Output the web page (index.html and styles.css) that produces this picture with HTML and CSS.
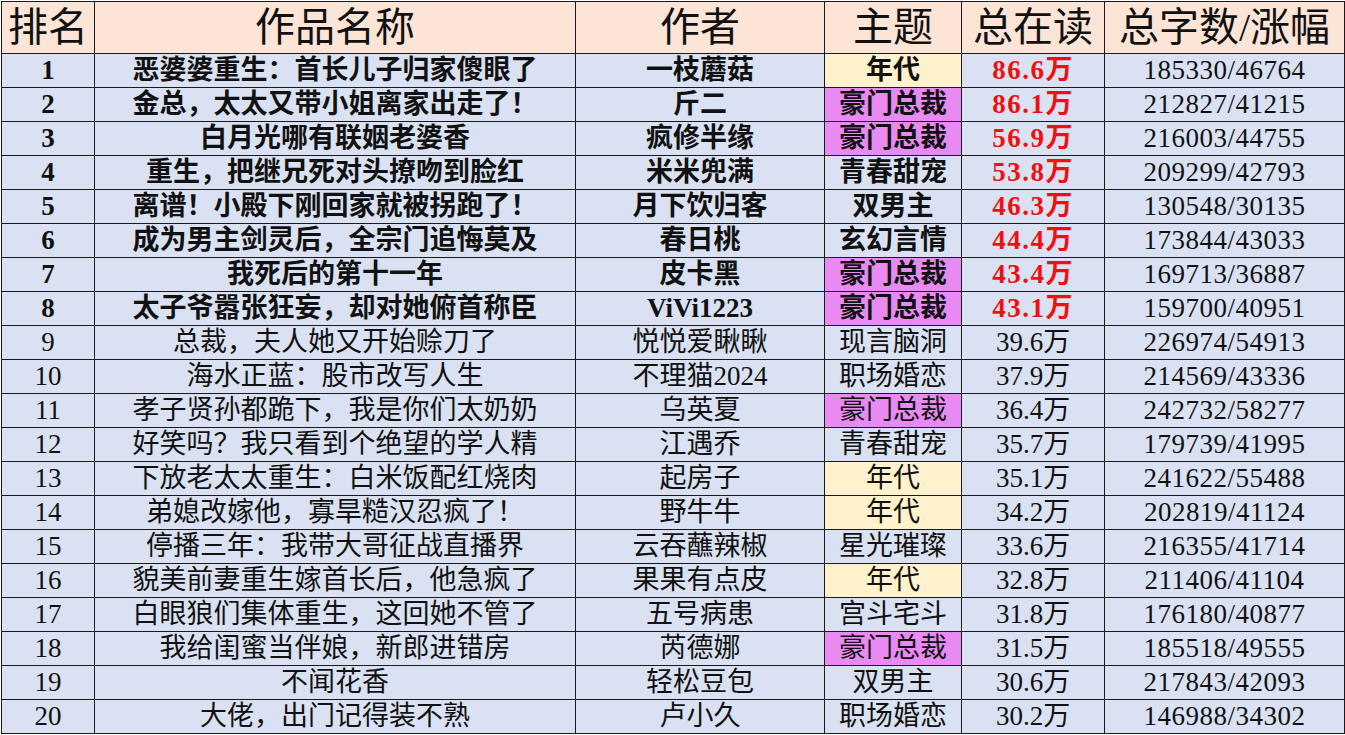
FILE: index.html
```html
<!DOCTYPE html>
<html lang="zh-CN">
<head>
<meta charset="utf-8">
<title>排名</title>
<link rel="stylesheet" href="styles.css">
</head>
<body>
<table class="rank">
  <colgroup>
    <col class="c-rank"><col class="c-title"><col class="c-author"><col class="c-theme"><col class="c-read"><col class="c-words">
  </colgroup>
  <thead>
    <tr class="head"><th>排名</th><th>作品名称</th><th>作者</th><th>主题</th><th>总在读</th><th>总字数/涨幅</th></tr>
  </thead>
  <tbody>
    <tr class="top"><td>1</td><td>恶婆婆重生：首长儿子归家傻眼了</td><td>一枝蘑菇</td><td class="t-yellow">年代</td><td class="red">86.6万</td><td class="num">185330/46764</td></tr>
    <tr class="top"><td>2</td><td>金总，太太又带小姐离家出走了！</td><td>斤二</td><td class="t-pink">豪门总裁</td><td class="red">86.1万</td><td class="num">212827/41215</td></tr>
    <tr class="top"><td>3</td><td>白月光哪有联姻老婆香</td><td>疯修半缘</td><td class="t-pink">豪门总裁</td><td class="red">56.9万</td><td class="num">216003/44755</td></tr>
    <tr class="top"><td>4</td><td>重生，把继兄死对头撩吻到脸红</td><td>米米兜满</td><td>青春甜宠</td><td class="red">53.8万</td><td class="num">209299/42793</td></tr>
    <tr class="top"><td>5</td><td>离谱！小殿下刚回家就被拐跑了！</td><td>月下饮归客</td><td>双男主</td><td class="red">46.3万</td><td class="num">130548/30135</td></tr>
    <tr class="top"><td>6</td><td>成为男主剑灵后，全宗门追悔莫及</td><td>春日桃</td><td>玄幻言情</td><td class="red">44.4万</td><td class="num">173844/43033</td></tr>
    <tr class="top"><td>7</td><td>我死后的第十一年</td><td>皮卡黑</td><td class="t-pink">豪门总裁</td><td class="red">43.4万</td><td class="num">169713/36887</td></tr>
    <tr class="top"><td>8</td><td>太子爷嚣张狂妄，却对她俯首称臣</td><td>ViVi1223</td><td class="t-pink">豪门总裁</td><td class="red">43.1万</td><td class="num">159700/40951</td></tr>
    <tr><td>9</td><td>总裁，夫人她又开始赊刀了</td><td>悦悦爱瞅瞅</td><td>现言脑洞</td><td>39.6万</td><td class="num">226974/54913</td></tr>
    <tr><td>10</td><td>海水正蓝：股市改写人生</td><td>不理猫2024</td><td>职场婚恋</td><td>37.9万</td><td class="num">214569/43336</td></tr>
    <tr><td>11</td><td>孝子贤孙都跪下，我是你们太奶奶</td><td>乌英夏</td><td class="t-pink">豪门总裁</td><td>36.4万</td><td class="num">242732/58277</td></tr>
    <tr><td>12</td><td>好笑吗？我只看到个绝望的学人精</td><td>江遇乔</td><td>青春甜宠</td><td>35.7万</td><td class="num">179739/41995</td></tr>
    <tr><td>13</td><td>下放老太太重生：白米饭配红烧肉</td><td>起房子</td><td class="t-yellow">年代</td><td>35.1万</td><td class="num">241622/55488</td></tr>
    <tr><td>14</td><td>弟媳改嫁他，寡旱糙汉忍疯了！</td><td>野牛牛</td><td class="t-yellow">年代</td><td>34.2万</td><td class="num">202819/41124</td></tr>
    <tr><td>15</td><td>停播三年：我带大哥征战直播界</td><td>云吞蘸辣椒</td><td>星光璀璨</td><td>33.6万</td><td class="num">216355/41714</td></tr>
    <tr><td>16</td><td>貌美前妻重生嫁首长后，他急疯了</td><td>果果有点皮</td><td class="t-yellow">年代</td><td>32.8万</td><td class="num">211406/41104</td></tr>
    <tr><td>17</td><td>白眼狼们集体重生，这回她不管了</td><td>五号病患</td><td>宫斗宅斗</td><td>31.8万</td><td class="num">176180/40877</td></tr>
    <tr><td>18</td><td>我给闺蜜当伴娘，新郎进错房</td><td>芮德娜</td><td class="t-pink">豪门总裁</td><td>31.5万</td><td class="num">185518/49555</td></tr>
    <tr><td>19</td><td>不闻花香</td><td>轻松豆包</td><td>双男主</td><td>30.6万</td><td class="num">217843/42093</td></tr>
    <tr><td>20</td><td>大佬，出门记得装不熟</td><td>卢小久</td><td>职场婚恋</td><td>30.2万</td><td class="num">146988/34302</td></tr>
  </tbody>
</table>
</body>
</html>
```

FILE: styles.css
```css
html, body {
  margin: 0;
  padding: 0;
  background: #ffffff;
}

body {
  padding: 1px 0 0 1px;
  overflow: hidden;
}

.rank {
  border-collapse: collapse;
  table-layout: fixed;
  width: 1344px;
  font-family: "Liberation Serif", "Noto Sans CJK SC", serif;
  color: #111111;
}

.c-rank { width: 93px; }
.c-title { width: 481px; }
.c-author { width: 249px; }
.c-theme { width: 137px; }
.c-read { width: 143px; }
.c-words { width: 240px; }

.rank th,
.rank td {
  border: 1px solid #1a1a1a;
  padding: 0;
  text-align: center;
  white-space: nowrap;
  overflow: hidden;
}

.head th {
  height: 51px;
  background: #fce4d6;
  font-size: 40px;
  font-weight: 400;
  line-height: 51px;
}

.rank tbody td {
  height: 33px;
  background: #d9e1f2;
  font-size: 27px;
  line-height: 33px;
  font-weight: 400;
}

.rank tbody tr.top td {
  font-weight: 700;
}

.rank tbody tr td.num {
  font-weight: 400;
  letter-spacing: 0.5px;
}

.rank tbody td.red {
  color: #f01010;
  letter-spacing: 1.5px;
}

.rank tbody td.t-yellow {
  background: #fff2cc;
}

.rank tbody td.t-pink {
  background: #e98af2;
}
```
